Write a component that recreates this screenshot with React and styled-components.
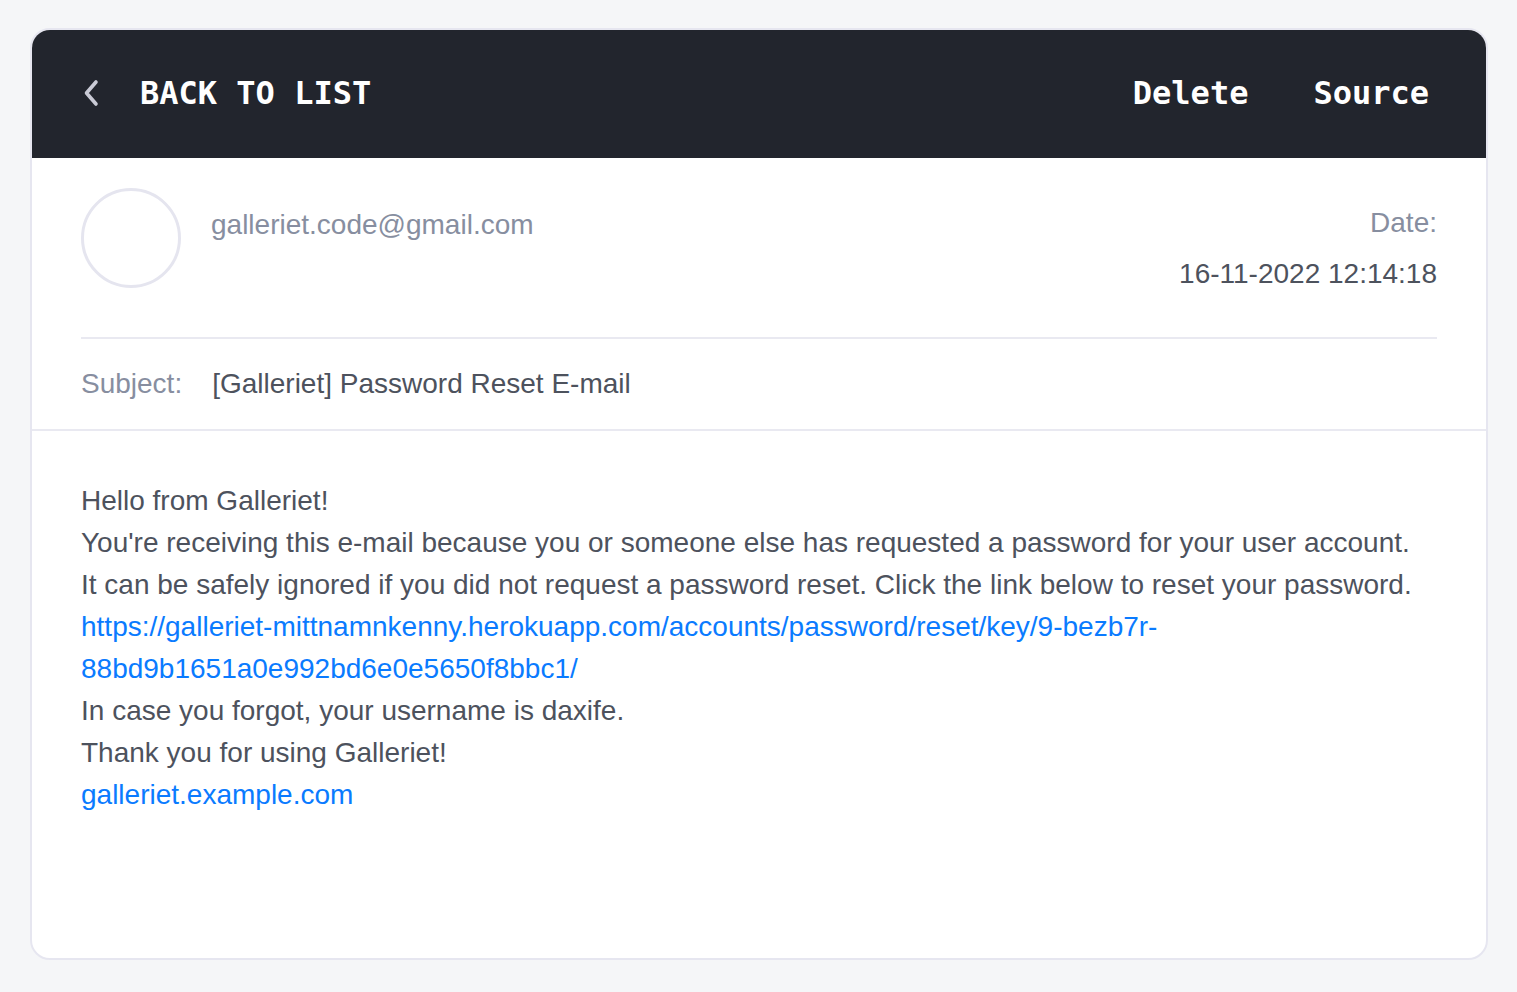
import React from "react";
import styled, { createGlobalStyle } from "styled-components";

const Global = createGlobalStyle`
  html, body { margin: 0; padding: 0; background: #f5f6f8; }
  body { font-family: "Liberation Sans", Arial, Helvetica, sans-serif; }
  * { box-sizing: border-box; }
`;

const Page = styled.div`
  padding: 28px 29px 32px 30px;
  min-height: 992px;
`;

const Card = styled.div`
  background: #fff;
  border: 2px solid #e6e6f0;
  border-radius: 20px;
  overflow: hidden;
  min-height: 932px;
  display: flex;
  flex-direction: column;
`;

const Toolbar = styled.div`
  height: 130px;
  margin: -2px -2px 0;
  background: #22252d;
  display: flex;
  align-items: center;
  justify-content: space-between;
  padding: 0 59px 0 53px;
  font-family: "DejaVu Sans Mono", "Liberation Mono", monospace;
  font-weight: bold;
  font-size: 32px;
  color: #fff;
`;

const BackLink = styled.a`
  display: flex;
  align-items: center;
  gap: 41px;
  color: #fff;
  text-decoration: none;
`;

const Actions = styled.div`
  display: flex;
  gap: 65px;
`;

const Action = styled.a`
  color: #fff;
  text-decoration: none;
`;

const Info = styled.div`
  padding: 30px 49px 0 49px;
  border-bottom: 2px solid #e9e9f1;
`;

const SenderRow = styled.div`
  display: flex;
  align-items: flex-start;
  padding-bottom: 42px;
  border-bottom: 2px solid #e9e9f1;
`;

const Avatar = styled.div`
  width: 100px;
  height: 100px;
  border-radius: 50%;
  border: 3px solid #e5e5ef;
  flex: none;
`;

const Email = styled.div`
  margin-left: 30px;
  margin-top: 16px;
  font-size: 28px;
  line-height: 42px;
  color: #878ea0;
  flex: 1;
`;

const DateBlock = styled.div`
  text-align: right;
  font-size: 28px;
  line-height: 42px;
  margin-top: 14px;
  display: flex;
  flex-direction: column;
  gap: 9px;
`;

const DateLabel = styled.div`
  color: #878ea0;
`;

const DateValue = styled.div`
  color: #4d525d;
`;

const SubjectRow = styled.div`
  display: flex;
  gap: 30px;
  font-size: 28px;
  line-height: 42px;
  padding: 24px 0 24px;
`;

const SubjectLabel = styled.span`
  color: #878ea0;
`;

const SubjectValue = styled.span`
  color: #4d525d;
`;

const Body = styled.div`
  padding: 49px 49px;
  font-size: 28px;
  line-height: 42px;
  color: #4d525d;
`;

const Line = styled.div``;

const Link = styled.a`
  color: #0a7bff;
  text-decoration: none;
  display: ${(p) => (p.$inline ? "inline" : "block")};
`;

function Chevron() {
  return (
    <svg width="16" height="28" viewBox="0 0 16 28" fill="none">
      <path d="M13 3 L3.5 14 L13 25" stroke="#c9cad5" strokeWidth="3.6" strokeLinecap="round" strokeLinejoin="round" />
    </svg>
  );
}

export default function App() {
  return (
    <Page>
      <Global />
      <Card>
        <Toolbar>
          <BackLink href="#">
            <Chevron />
            <span>BACK TO LIST</span>
          </BackLink>
          <Actions>
            <Action href="#">Delete</Action>
            <Action href="#">Source</Action>
          </Actions>
        </Toolbar>
        <Info>
          <SenderRow>
            <Avatar />
            <Email>galleriet.code@gmail.com</Email>
            <DateBlock>
              <DateLabel>Date:</DateLabel>
              <DateValue>16-11-2022 12:14:18</DateValue>
            </DateBlock>
          </SenderRow>
          <SubjectRow>
            <SubjectLabel>Subject:</SubjectLabel>
            <SubjectValue>[Galleriet] Password Reset E-mail</SubjectValue>
          </SubjectRow>
        </Info>
        <Body>
          <Line>Hello from Galleriet!</Line>
          <Line>You're receiving this e-mail because you or someone else has requested a password for your user account.</Line>
          <Line>It can be safely ignored if you did not request a password reset. Click the link below to reset your password.</Line>
          <Link href="#">https://galleriet-mittnamnkenny.herokuapp.com/accounts/password/reset/key/9-bezb7r-<br />88bd9b1651a0e992bd6e0e5650f8bbc1/</Link>
          <Line>In case you forgot, your username is daxife.</Line>
          <Line>Thank you for using Galleriet!</Line>
          <Link href="#" $inline>galleriet.example.com</Link>
        </Body>
      </Card>
    </Page>
  );
}
